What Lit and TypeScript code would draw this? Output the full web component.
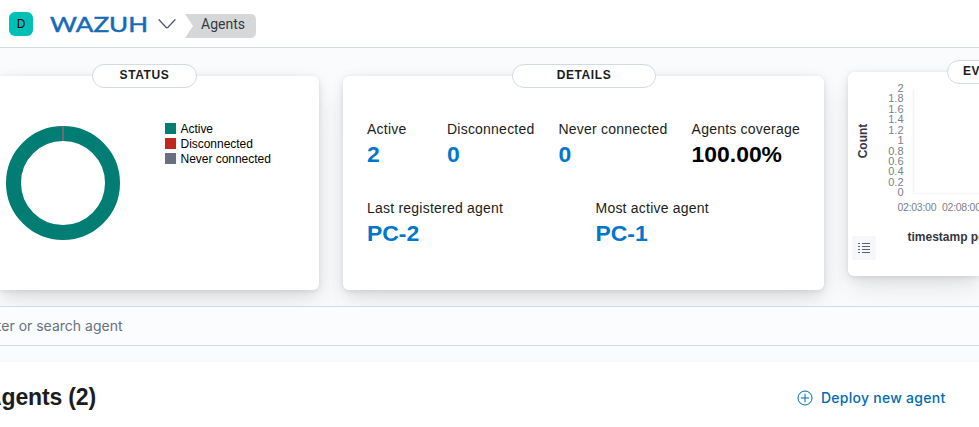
import { LitElement, html, css, svg } from "lit";
import { customElement } from "lit/decorators.js";

const LEGEND = [
  { label: "Active", color: "#017d73" },
  { label: "Disconnected", color: "#bd271e" },
  { label: "Never connected", color: "#69707d" },
];
const TICKS = ["2", "1.8", "1.6", "1.4", "1.2", "1", "0.8", "0.6", "0.4", "0.2", "0"];

@customElement("app-root")
export class AppRoot extends LitElement {
  static styles = css`
    :host {
      display: flex;
      flex-direction: column;
      height: 427px;
      overflow: hidden;
      background: #fafbfd;
      color: #1a1c21;
      font-family: "Liberation Sans", Arial, sans-serif;
      font-size: 14px;
      line-height: 20px;
    }
    * { box-sizing: border-box; }
    svg { display: block; flex: none; }
    header {
      flex: none;
      height: 48px;
      display: flex;
      align-items: center;
      background: #fff;
      border-bottom: 1px solid #d3dae6;
      padding-left: 9px;
    }
    .avatar {
      width: 24px;
      height: 24px;
      border-radius: 6px;
      background: #00bfb3;
      color: #000;
      font: 12px/24px Inter, sans-serif;
      text-align: center;
      margin-right: 17px;
    }
    .logo { overflow: visible; }
    .chevron { margin-left: 9px; }
    .crumb {
      margin: 5px 0 0 8px;
      height: 24px;
      width: 71px;
      padding-left: 16px;
      border-radius: 0 5px 5px 0;
      background: #d6d7d9;
      clip-path: polygon(0 0, 100% 0, 100% 100%, 0 100%, 8px 50%);
      color: #343741;
      font: 14px/20px Roboto, sans-serif;
    }
    .cards {
      flex: none;
      display: grid;
      grid-template-columns: 319px 481px 1fr;
      column-gap: 24px;
      align-items: start;
      height: 258px;
      padding-top: 28px;
    }
    .card {
      position: relative;
      height: 214px;
      background: #fff;
      border-radius: 6px;
      box-shadow: 0 1px 5px rgba(0,0,0,.08), 0 3.6px 13px rgba(0,0,0,.07),
        0 8.4px 23px rgba(0,0,0,.05), 0 23px 35px rgba(0,0,0,.03);
    }
    .status { border-radius: 0 6px 6px 0; display: flex; }
    .evolution { height: 204px; margin-top: -4px; border-radius: 6px 0 0 6px; }
    .pill {
      position: absolute;
      top: -12px;
      height: 24px;
      border: 1px solid #d3dae6;
      border-radius: 12px;
      background: #fff;
      text-align: center;
      font-weight: 700;
      font-size: 12px;
      line-height: 20px;
      letter-spacing: .6px;
      white-space: nowrap;
    }
    .status .pill { left: 92px; width: 105px; }
    .details .pill { left: 169px; width: 144px; }
    .evolution .pill { left: 99px; width: 160px; text-align: left; padding-left: 15px; }
    .donut { margin: 50px 0 0 6px; }
    .legend { margin: 46px 0 0 45px; color: #000; font-size: 12px; line-height: 15px; }
    .item { display: flex; align-items: center; gap: 4.5px; height: 15px; white-space: nowrap; letter-spacing: -.03px; }
    .swatch { width: 11px; height: 11px; margin-top: -2px; }
    .details { padding: 43px 24px 0; }
    .stats { display: flex; gap: 24px; height: 79px; }
    .row { display: grid; grid-template-columns: 228.5px 1fr; }
    .stat { flex: none; white-space: nowrap; letter-spacing: .22px; }
    .first { width: 56px; }
    .value { font-weight: 700; font-size: 22.9px; line-height: 31px; color: #0077cc; letter-spacing: 0; }
    .total { color: #000; }
    .search {
      flex: none;
      height: 40px;
      border: solid #d3dae6;
      border-width: 1px 0;
      background: #fbfcfd;
      position: relative;
      display: flex;
      align-items: center;
      color: #69707d;
      font: 14px/20px Inter, sans-serif;
      white-space: nowrap;
    }
    .search span { width: 122.5px; display: flex; justify-content: flex-end; }
    .panel {
      flex: none;
      height: 80px;
      margin-top: 16px;
      padding: 0 33.5px 9px 0;
      background: #fff;
      box-shadow: 0 0 2px rgba(0,0,0,.06);
      display: flex;
      align-items: center;
      justify-content: space-between;
    }
    .title { width: 96px; display: flex; justify-content: flex-end; white-space: nowrap; font-size: 23px; font-weight: 700; letter-spacing: -.15px; margin: -1px 0 0; }
    .deploy { display: flex; align-items: center; gap: 8px; color: #006bb4; font: 500 14px/20px Inter, sans-serif; letter-spacing: .27px; }
    .list { fill: none; stroke: #5a6270; stroke-width: 1.1; }
  `;

  render() {
    return html`
      <header>
        <div class="avatar">D</div>
        <svg class="logo" width="98" height="24" viewBox="0 0 98 24">
          <text x="0" y="20.3" textLength="98" lengthAdjust="spacingAndGlyphs"
            font-family="Lato" font-size="22" fill="#176bb4" stroke="#176bb4" stroke-width=".5">WAZUH</text>
        </svg>
        <svg class="chevron" width="20" height="12" viewBox="0 0 20 12" fill="none" stroke="#535966" stroke-width="1.3" stroke-linecap="round">
          <path d="M2 1.8 9 9.2q1 1 2 0L18 1.8" />
        </svg>
        <div class="crumb">Agents</div>
      </header>
      <section class="cards">
        <div class="card status">
          <div class="pill">STATUS</div>
          <svg class="donut" width="114" height="114" viewBox="0 0 114 114">
            <circle cx="57" cy="57" r="49.5" fill="none" stroke="#017d73" stroke-width="15" />
            <path d="M57 0v15" stroke="#69707d" stroke-width="1.6" />
            <path d="M57 0v15" stroke="#a0605f" stroke-width=".6" />
          </svg>
          <div class="legend">
            ${LEGEND.map((l) => html`<div class="item"><span class="swatch" style="background:${l.color}"></span>${l.label}</div>`)}
          </div>
        </div>
        <div class="card details">
          <div class="pill">DETAILS</div>
          <div class="stats">
            <div class="stat first">Active<div class="value">2</div></div>
            <div class="stat">Disconnected<div class="value">0</div></div>
            <div class="stat">Never connected<div class="value">0</div></div>
            <div class="stat">Agents coverage<div class="value total">100.00%</div></div>
          </div>
          <div class="row">
            <div class="stat">Last registered agent<div class="value">PC-2</div></div>
            <div class="stat">Most active agent<div class="value">PC-1</div></div>
          </div>
        </div>
        <div class="card evolution">
          <div class="pill">EVOLUTION</div>
          <svg width="131" height="204" viewBox="0 0 131 204" font-family="Liberation Sans">
            <path d="M65.5 17v104.5H131" fill="none" stroke="#f5f5f6" stroke-width="1.6" />
            <g fill="#7b808b" font-size="11" text-anchor="end">
              ${TICKS.map((t, i) => svg`<text x="55.5" y=${19.8 + i * 10.45}>${t}</text>`)}
            </g>
            <g fill="#7b808b" font-size="10.5" text-anchor="middle">
              <text x="69" y="139" textLength="39">02:03:00</text>
              <text x="113.5" y="139" textLength="39">02:08:00</text>
            </g>
            <text transform="translate(19 69) rotate(-90)" text-anchor="middle" font-size="12" font-weight="700" fill="#343741">Count</text>
            <text x="59.5" y="169" font-size="12" font-weight="700" fill="#343741">timestamp per 5 minutes</text>
            <rect x="4" y="164" width="24" height="24" rx="3" fill="#f5f7fb" />
            <path class="list" d="M10 171.5h2M10 174.5h2M10 177.5h2M10 180.5h2M14 171.5h8M14 174.5h8M14 177.5h8M14 180.5h8" />
          </svg>
        </div>
      </section>
      <div class="search"><span>Filter or search agent</span></div>
      <section class="panel">
        <h2 class="title">Agents (2)</h2>
        <div class="deploy">
          <svg width="16" height="16" viewBox="0 0 16 16" fill="none" stroke="#006bb4"><circle cx="8" cy="8" r="7" /><path d="M8 3.8v8.4M3.8 8h8.4" /></svg>
          Deploy new agent
        </div>
      </section>
    `;
  }
}
